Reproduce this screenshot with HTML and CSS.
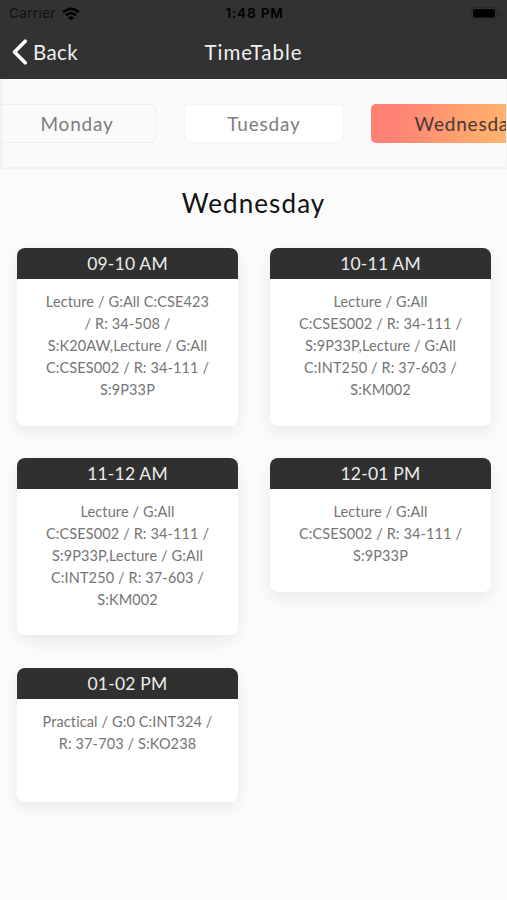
FILE: index.html
```html
<!DOCTYPE html>
<html lang="en">
<head>
<meta charset="utf-8">
<title>TimeTable</title>
<link rel="stylesheet" href="styles.css">
</head>
<body>
<header class="header">
  <div class="status">
    <div class="carrier">Carrier
      <svg width="18" height="14" viewBox="0 0 18 14" fill="none" stroke="#000" stroke-width="2.5"><path d="M1.2 5.2Q9-1.8 16.8 5.2M4 8.3Q9 4 14 8.3"/><path d="M6 10.5Q9 8 12 10.5L9 13.5Z" fill="#000" stroke="none"/></svg>
    </div>
    <div class="clock">1:48 PM</div>
    <svg class="battery" width="29" height="13" viewBox="0 0 29 13"><rect x=".5" y=".5" width="25" height="11.5" rx="3.5" fill="none" stroke="#292929"/><rect x="2" y="2" width="22" height="8.5" rx="2" fill="#000"/><path d="M27 4v4.500q1.500-.6 1.500-2.250T27 4" fill="#222"/></svg>
  </div>
  <nav class="nav">
    <a class="back"><svg width="16" height="26" viewBox="0 0 16 26" fill="none" stroke="#fff" stroke-width="3.600" stroke-linecap="round" stroke-linejoin="round"><path d="M13.200 2.200 2.500 13 13.200 23.800"/></svg><span>Back</span></a>
    <h1 class="title">TimeTable</h1>
  </nav>
</header>
<div class="days">
  <button class="day monday">Monday</button>
  <button class="day tuesday">Tuesday</button>
  <button class="day active">Wednesday</button>
</div>
<main>
  <h2 class="heading">Wednesday</h2>
  <div class="grid">
    <section class="card"><h3>09-10 AM</h3><p>Lecture / G:All C:CSE423<br>/ R: 34-508 /<br>S:K20AW,Lecture / G:All<br>C:CSES002 / R: 34-111 /<br>S:9P33P</p></section>
    <section class="card"><h3>10-11 AM</h3><p>Lecture / G:All<br>C:CSES002 / R: 34-111 /<br>S:9P33P,Lecture / G:All<br>C:INT250 / R: 37-603 /<br>S:KM002</p></section>
    <section class="card"><h3>11-12 AM</h3><p>Lecture / G:All<br>C:CSES002 / R: 34-111 /<br>S:9P33P,Lecture / G:All<br>C:INT250 / R: 37-603 /<br>S:KM002</p></section>
    <section class="card"><h3>12-01 PM</h3><p>Lecture / G:All<br>C:CSES002 / R: 34-111 /<br>S:9P33P</p></section>
    <section class="card"><h3>01-02 PM</h3><p>Practical / G:0 C:INT324 /<br>R: 37-703 / S:KO238</p></section>
  </div>
</main>
</body>
</html>
```
FILE: styles.css
```css
* { box-sizing: border-box; }
body {
  margin: 0;
  height: 900px;
  overflow: hidden;
  background: #fbfbfb;
  font-family: Lato, "Noto Sans", sans-serif;
}
h1, h2, h3, p { margin: 0; font-weight: 400; }
.header {
  height: 79px;
  background: #323232;
}
.status {
  display: grid;
  grid-template-columns: 1fr auto 1fr;
  align-items: center;
  height: 27px;
  padding: 0 7px 0 9px;
  color: #000;
  font: 13.6px/27px Inter, sans-serif;
}
.carrier {
  display: flex;
  align-items: center;
  gap: 6px;
  color: #111;
  letter-spacing: .3px;
}
.clock { font-weight: 600; letter-spacing: .8px; }
.battery { justify-self: end; }
.nav {
  display: grid;
  grid-template-columns: 1fr auto 1fr;
  align-items: center;
  height: 50px;
  padding: 0 12px;
  color: #efefef;
  font-size: 20.5px;
}
.back { display: flex; align-items: center; gap: 5px; letter-spacing: .4px; }
.title { padding-bottom: 1px; font-size: 20.5px; letter-spacing: .95px; }
.days {
  display: flex;
  gap: 28px;
  height: 90px;
  padding-top: 25px;
  overflow: hidden;
  background: #fafafa;
  border: solid #f2f2f2;
  border-width: 0 1px 2px 3px;
}
.day {
  flex: none;
  width: 160px;
  height: 39px;
  padding: 0;
  border: 1px solid #f3f3f3;
  border-radius: 5px;
  background: #fff;
  color: #7d7d7d;
  font: 19px Lato, sans-serif;
  letter-spacing: .8px;
}
.monday { margin-left: -7px; padding-left: 2px; background: #fafafa; border-color: #efefef; }
.active {
  width: 192px;
  margin-left: -1px;
  border: 0;
  background: linear-gradient(100deg, #ff8174 12%, #ffb66d 72%);
  color: #4a3833;
}
.heading {
  height: 79px;
  padding-top: 16px;
  color: #111;
  font-size: 26px;
  line-height: 36px;
  letter-spacing: 1.1px;
  text-align: center;
}
.grid {
  display: grid;
  grid-template-columns: 221px 221px;
  gap: 32.300px 32px;
  align-items: start;
  padding-left: 17px;
}
.card {
  border-radius: 8px;
  background: #fff;
  box-shadow: 0 6px 16px rgba(0, 0, 0, .07);
  overflow: hidden;
  min-height: 134px;
}
.card h3 {
  height: 31px;
  background: #303030;
  color: #ececec;
  font-size: 17.5px;
  line-height: 32px;
  letter-spacing: .2px;
  text-align: center;
}
.card p {
  padding: 12px 0 24.500px;
  color: #757575;
  font-size: 14.5px;
  line-height: 22px;
  letter-spacing: .12px;
  text-align: center;
  white-space: nowrap;
}
```
